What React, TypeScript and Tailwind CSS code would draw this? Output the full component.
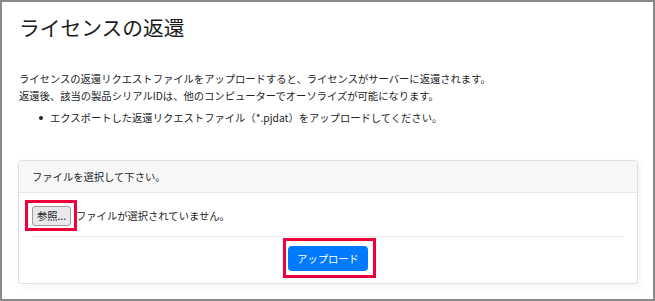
import React from 'react';

const jp = { fontFamily: '"Noto Sans CJK JP", "Noto Sans", sans-serif' };

// red annotation frame drawn over a control
function Mark({ children, className }: { children: React.ReactNode; className: string }) {
  return (
    <span className="relative inline-flex">
      {children}
      <span className={`absolute border-[3px] border-[#f0003a] pointer-events-none ${className}`} />
    </span>
  );
}

export default function App() {
  return (
    <div
      className="w-[655px] h-[301px] overflow-hidden bg-white border-2 border-[#8a8a8a] text-[#212529]"
      style={jp}
    >
      <div className="pl-[17px] pr-[15px] pt-[12px]">
        <h1 className="text-[20.75px] leading-[26px] font-normal text-[#1c1c1c]">ライセンスの返還</h1>

        <div className="mt-[30px] text-[10.3px] leading-[17px]">
          <p>ライセンスの返還リクエストファイルをアップロードすると、ライセンスがサーバーに返還されます。</p>
          <p>返還後、該当の製品シリアルIDは、他のコンピューターでオーソライズが可能になります。</p>
        </div>

        <div className="mt-[5px] flex items-center h-[17px] text-[10.3px] leading-[17px]">
          <span className="ml-[20px] w-[4px] h-[4px] rounded-full bg-[#212529]" />
          <span className="ml-[7px]">エクスポートした返還リクエストファイル（*.pjdat）をアップロードしてください。</span>
        </div>

        <div className="mt-[34px] w-[620px] -ml-[1px] rounded-[4px] border border-[#dfdfdf] shadow-[2px_3px_6px_rgba(0,0,0,0.05)]">
          <div className="h-[32px] flex items-center px-[13px] bg-[#f7f7f7] border-b border-[#e6e6e6] rounded-t-[4px] text-[10.3px]">
            ファイルを選択して下さい。
          </div>
          <div className="pt-[13px] pb-[12px] px-[13px]">
            <div className="flex items-center h-[20px] text-[10.3px]">
              <Mark className="-left-[7px] -right-[6px] -top-[6px] -bottom-[5px]">
                <button className="h-[20px] w-[39px] rounded-[3px] border border-[#9d9d9d] bg-[#e9e9ed] text-[10.3px] text-[#222]">
                  参照...
                </button>
              </Mark>
              <span className="ml-[5px]">ファイルが選択されていません。</span>
            </div>
            <div className="mt-[10px] border-t border-[#e9e9e9]" />
            <div className="mt-[9px] flex justify-center">
              <Mark className="-left-[5px] -right-[8px] -top-[8px] -bottom-[7px]">
                <button className="h-[25px] w-[80px] rounded-[4px] bg-[#007bff] text-white text-[10.3px]">
                  アップロード
                </button>
              </Mark>
            </div>
          </div>
        </div>
      </div>
    </div>
  );
}
